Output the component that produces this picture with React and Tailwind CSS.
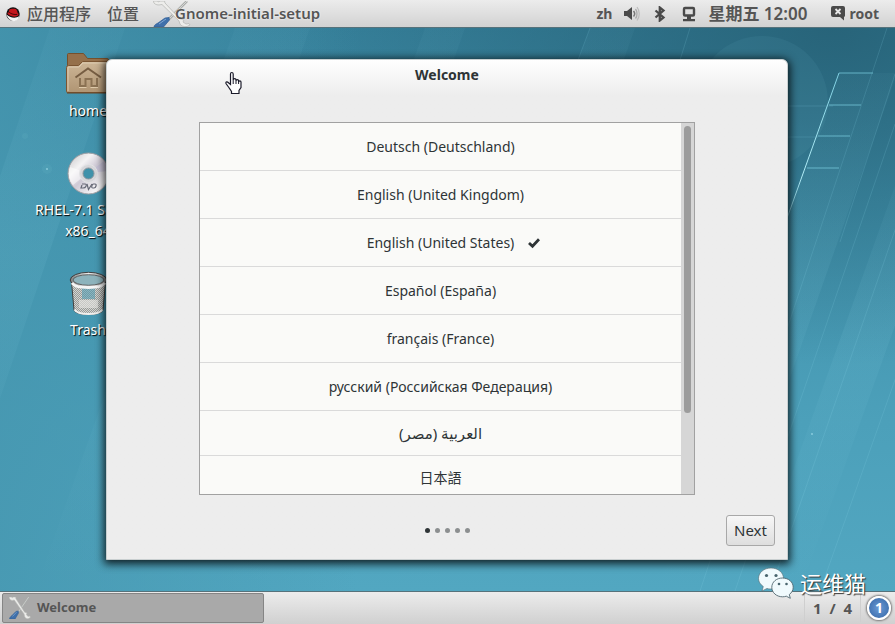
import React, { useState } from 'react';

const languages = [
  { id: 'de', label: 'Deutsch (Deutschland)' },
  { id: 'en-gb', label: 'English (United Kingdom)' },
  { id: 'en-us', label: 'English (United States)' },
  { id: 'es', label: 'Español (España)' },
  { id: 'fr', label: 'français (France)' },
  { id: 'ru', label: 'русский (Российская Федерация)' },
  { id: 'ar', label: 'العربية (مصر)', rtl: true },
  { id: 'ja', label: '日本語' },
];

const Wallpaper = () => (
  <svg className="absolute inset-0 h-full w-full" viewBox="0 0 895 563" preserveAspectRatio="none" aria-hidden="true">
    <defs>
      <linearGradient id="sky" x1="0" y1="0" x2="0" y2="1">
        <stop offset="0" stopColor="#36809a" />
        <stop offset="0.35" stopColor="#4293ad" />
        <stop offset="0.7" stopColor="#4ca0ba" />
        <stop offset="1" stopColor="#52a7c1" />
      </linearGradient>
      <linearGradient id="leftGlow" x1="0" y1="0" x2="1" y2="0">
        <stop offset="0" stopColor="#4697b0" stopOpacity="0.8" />
        <stop offset="0.4" stopColor="#4697b0" stopOpacity="0" />
      </linearGradient>
      <radialGradient id="corner" cx="0.93" cy="0" r="0.6">
        <stop offset="0" stopColor="#255f74" stopOpacity="0.85" />
        <stop offset="1" stopColor="#255f74" stopOpacity="0" />
      </radialGradient>
      <linearGradient id="ray" x1="0" y1="0" x2="0" y2="1">
        <stop offset="0" stopColor="#7fd0e2" />
        <stop offset="0.5" stopColor="#b4eef8" />
        <stop offset="1" stopColor="#7fd0e2" stopOpacity="0" />
      </linearGradient>
      <linearGradient id="band" x1="0" y1="0" x2="0" y2="1">
        <stop offset="0" stopColor="#8fd8ea" stopOpacity="0.04" />
        <stop offset="0.4" stopColor="#8fd8ea" stopOpacity="0.09" />
        <stop offset="1" stopColor="#8fd8ea" stopOpacity="0" />
      </linearGradient>
    </defs>
    <rect width="895" height="563" fill="url(#sky)" />
    <rect width="895" height="563" fill="url(#leftGlow)" />
    <rect width="895" height="563" fill="url(#corner)" />
    <g fill="url(#band)">
      <path d="M50 0h75L-65 563h-75z" />
      <path d="M235 0h75L110 563H35z" />
      <path d="M425 0h40L265 563h-40z" />
      <path d="M590 0h45L435 563h-45z" />
      <path d="M839 45h58L715 563h-58z" />
      <path d="M905 130h50L800 563h-50z" />
    </g>
    <circle cx="762" cy="74" r="66" fill="#6fb4c6" opacity="0.1" />
    <g stroke="#8fd8ea" strokeOpacity="0.16">
      <path d="M887 0 700 563M965 0 770 563M1020 0 820 563M590 0 578 32M690 0 680 32" />
      <path d="M895 46 840 214M895 96 735 563" />
      <path d="M788 78h45M788 109h30" />
    </g>
    <path d="M839 45 766 249" stroke="url(#ray)" fill="none" />
    <path d="M839 45h34M829 77h32M818 108h32M807 140h32" stroke="#74c6d8" strokeOpacity="0.8" />
    <g fill="#aee6f0">
      <circle cx="47" cy="141" r="1" opacity="0.6" />
      <circle cx="812" cy="406" r="1" opacity="0.6" />
      <circle cx="25" cy="108" r="3" opacity="0.06" />
      <circle cx="47" cy="141" r="5" opacity="0.06" />
    </g>
  </svg>
);

const RedHatIcon = () => (
  <svg className="h-4 w-4" viewBox="0 0 16 16" aria-hidden="true">
    <circle cx="8" cy="8" r="6.7" fill="#111" />
    <path d="M1.500 8.500c3 3 9 4.500 12.800 1.500-.6 3.300-3 5-5.300 5.200-2.500 0-6-2-7.500-6.700z" fill="#f4f4f4" />
    <path d="M4.300 3.600C6 2.300 8 3 9.300 2.800c2.200-.2 2.800 1.600 3.400 4.200 1 .6 1.300 1.600.4 2.600-2 2-7.300 1.100-10.400-1.700-.7-1 .1-1.500 1-1.400z" fill="#c4161c" />
    <path d="M4.200 6.300c2 1.800 5.300 2.600 8 2.100" stroke="#4c0508" fill="none" />
  </svg>
);

// Wrench crossed with a screwdriver
const ToolsIcon = ({ className }) => (
  <svg className={className} viewBox="0 0 38 26" preserveAspectRatio="none" aria-hidden="true">
    <path d="M34 0 16 18" stroke="#a9acaa" strokeWidth="2.500" />
    <path d="M34 0 16 18" stroke="#d4d5d3" strokeWidth="1" />
    <path d="M1 26c0-2 2-3 4-4l7-5 4-.5.500 2.500-6 7z" fill="#3f70ab" stroke="#2d5b94" strokeWidth="0.700" />
    <path d="m6 23 7-5" stroke="#7fa6d1" />
    <path d="M0 0c1 3 3 4 6 4l3-.5L26 20l1 3c1 2 4 3 7 2.500l3-1.500-1-1.500-3 .5-3-2 1-2-4-1L12 2l-.5-2H6.500L6 1 4 0z" fill="#ededeb" stroke="#b9bab7" strokeWidth="0.800" />
  </svg>
);

const VolumeIcon = () => (
  <svg className="h-4 w-4" viewBox="0 0 16 16" fill="none" aria-hidden="true">
    <path d="M0 5h3l5-4v13l-5-4H0z" fill="#4a4a4a" />
    <path d="M9.500 5c1.300 1.500 1.300 4 0 5.500" stroke="#777" strokeWidth="1.500" />
    <path d="M11.500 3c2 2.500 2 7 0 9.500" stroke="#aaa" strokeWidth="1.300" />
    <path d="M13 1c3 4 3 9.500 0 13.500" stroke="#bbb" strokeWidth="1.200" />
  </svg>
);

const BluetoothIcon = () => (
  <svg className="h-4 w-3" viewBox="0 0 12 16" fill="none" aria-hidden="true">
    <path d="m1.500 4.500 8 7L5.800 14.500v-13l3.700 3-8 7" stroke="#4a4a4a" strokeWidth="2.300" />
  </svg>
);

const NetworkIcon = () => (
  <svg className="h-4 w-3.5" viewBox="0 0 14 16" fill="none" aria-hidden="true">
    <rect x="2" y="2" width="10" height="7.500" rx="1" stroke="#4a4a4a" strokeWidth="2.400" />
    <path d="M5 10h4v3h4v2.200H1V13h4z" fill="#4a4a4a" />
  </svg>
);

const ChatIcon = () => (
  <svg className="h-4 w-3.5" viewBox="0 0 14 16" aria-hidden="true">
    <path d="M2 0h10a2 2 0 0 1 2 2v7a2 2 0 0 1-1 2v3.500L9 11H2a2 2 0 0 1-2-2V2a2 2 0 0 1 2-2z" fill="#4a4a4a" />
    <path d="m4.500 3 5 5m0-5-5 5" stroke="#e8e8e8" strokeWidth="1.800" />
  </svg>
);

const FolderIcon = () => (
  <svg className="h-12 w-12" viewBox="0 0 48 48" aria-hidden="true">
    <defs>
      <linearGradient id="folder" x1="0" y1="0" x2="0" y2="1">
        <stop offset="0" stopColor="#cdb697" />
        <stop offset="1" stopColor="#b09573" />
      </linearGradient>
    </defs>
    <path d="M3.500 42V4.500q0-1 1-1h15l4 5H43q1.500 0 1.500 1.500v32z" fill="#95704b" stroke="#76502c" />
    <path d="M2.500 41.500v-24q0-2 2-2h10l4-4H44q2 0 2 2v28q0 1-1 1H3.500q-1 0-1-1z" fill="url(#folder)" stroke="#7b5532" />
    <path d="M4 41V18q0-1 1-1h10l4-4h26" fill="none" stroke="#ddcbb1" />
    <path d="M3 43h42" stroke="#6b4522" />
    <path d="M11.500 27.500 24 18.500l13 9" fill="none" stroke="#765d42" strokeWidth="2" />
    <path d="M16 28v8h5.500v-7h6v7H33v-8" fill="none" stroke="#8b7253" strokeWidth="2" />
    <path d="M15 37.500h7.500m4 0H34" stroke="#dfcaaa" />
  </svg>
);

const DiscIcon = () => (
  <svg className="h-12 w-12" viewBox="0 0 48 48" aria-hidden="true">
    <defs>
      <linearGradient id="disc" x1="0" y1="0" x2="1" y2="1">
        <stop offset="0" stopColor="#c4c3c5" />
        <stop offset="0.3" stopColor="#f4f3f4" />
        <stop offset="0.5" stopColor="#cfcad6" />
        <stop offset="0.8" stopColor="#f7f6f7" />
        <stop offset="1" stopColor="#b9babf" />
      </linearGradient>
    </defs>
    <circle cx="24.500" cy="24.500" r="20.500" fill="url(#disc)" stroke="#9b9ca1" />
    <path d="M24 24 6 18a20 20 0 0 0 3 18z" fill="#fff" opacity="0.500" />
    <path d="m24 24 16-12a20 20 0 0 1 4 10z" fill="#b3afd1" opacity="0.400" />
    <circle cx="24.500" cy="24.500" r="9" fill="#d6d6da" stroke="#e4e4e6" />
    <circle cx="24.500" cy="24.500" r="5.500" fill="#3f91aa" stroke="#8b949b" />
    <g fill="none" stroke="#666976" strokeWidth="1.200">
      <path d="M18 35h3q2 0 1 2.200-.7 1.800-3 1.800h-2l1-3" />
      <path d="m23 35 1.500 5.500L28 35" />
      <path d="M29.500 35H31q1.500 0 1 2-.5 2-2 2h-1q-1.700 0-1.200-2 .5-2 1.700-2z" />
    </g>
  </svg>
);

const TrashIcon = () => (
  <svg className="h-12 w-12" viewBox="0 0 48 48" aria-hidden="true">
    <defs>
      <pattern id="mesh" width="2" height="2" patternUnits="userSpaceOnUse">
        <rect width="2" height="2" fill="#d4d5d2" />
        <path d="M0 0h1v1H0zM1 1h1v1H1z" fill="#989b98" />
      </pattern>
      <linearGradient id="rim" x1="0" y1="0" x2="1" y2="0">
        <stop offset="0" stopColor="#888" />
        <stop offset="0.5" stopColor="#eee" />
        <stop offset="1" stopColor="#888" />
      </linearGradient>
    </defs>
    <path d="m7.500 13 2.500 28c1 6 28 6 29 0l2.500-28z" fill="url(#mesh)" stroke="#41413f" />
    <path d="M18 19h13v11H18z" fill="#4d9bb2" opacity="0.550" />
    <path d="M15 31h19v8H15z" fill="#e6e6e3" opacity="0.600" />
    <path d="M10.500 40.500c3 6 25 6 28 0" fill="none" stroke="#f0f0ee" strokeWidth="1.800" />
    <ellipse cx="24.500" cy="11" rx="17" ry="6.500" fill="#8db3bc" stroke="url(#rim)" strokeWidth="2.500" />
    <ellipse cx="24.500" cy="11" rx="18.300" ry="7.700" fill="none" stroke="#333" strokeWidth="0.900" />
    <ellipse cx="24.500" cy="11" rx="15.500" ry="5.300" fill="none" stroke="#555" strokeWidth="0.900" />
    <path d="M8 14c4 6 29 6 33 0" fill="none" stroke="#f5f5f5" strokeWidth="3" />
  </svg>
);

const CheckIcon = () => (
  <svg className="h-3 w-3" viewBox="0 0 12 12" aria-hidden="true">
    <path d="m1 6 3.500 3.300L11 2.300" fill="none" stroke="#2e3436" strokeWidth="2.800" />
  </svg>
);

const HandPointer = () => (
  <svg className="absolute left-[117px] top-[11px] h-6 w-5" viewBox="0 0 20 24" aria-hidden="true">
    <path
      d="M6.500 13.500V3q0-1.500 1.300-1.500T9.200 3v6q0-1.400 1.400-1.400T12 9v1q0-1.300 1.300-1.300T14.600 10v1q0-1.200 1.200-1.200T17 11v5.500l-2 3v3H7.500v-2L4.500 16 2 12.500q-.4-1.500.8-1.700 1 0 1.700 1z"
      fill="#fff"
      stroke="#1b1b2a"
      strokeWidth="1.200"
    />
    <path d="M9.200 9v4m2.800-3v3m2.600-2v2" stroke="#1b1b2a" />
  </svg>
);

const WeChatIcon = () => (
  <svg className="h-8 w-9" viewBox="0 0 36 32" aria-hidden="true">
    <path d="M13 1c7 0 12.500 4.500 12.500 10.500S20 22 13 22c-1.500 0-3-.2-4-.6L4 24l1.300-4.500C2.300 17.500.5 14.700.5 11.500.5 5.500 6 1 13 1z" fill="#f0fafd" stroke="#526870" strokeWidth="0.600" />
    <path d="M24.500 11c6 0 10.700 4 10.700 9.300 0 3-1.500 5.500-3.900 7.200l1 3.800-4-2.100c-1.100.4-2.400.6-3.800.6-6 0-10.700-4.200-10.700-9.500S18.500 11 24.500 11z" fill="#f0fafd" stroke="#526870" strokeWidth="0.900" />
    <g fill="#49656e">
      <circle cx="8.500" cy="8.500" r="1.600" />
      <circle cx="18" cy="8.500" r="1.600" />
      <circle cx="21" cy="17" r="1.300" />
      <circle cx="28.500" cy="17" r="1.300" />
    </g>
  </svg>
);

const DesktopItem = ({ icon, children }) => (
  <li className="flex flex-col items-center gap-0.5">
    {icon}
    <span className="text-center text-sm leading-[21px] text-white [text-shadow:1px_1px_1px_#000]">{children}</span>
  </li>
);

const TopBar = () => (
  <header className="flex h-7 items-center border-b border-[#56727b] bg-linear-to-b from-[#ececec] to-[#d2d2d2] pl-[5px] pr-4 text-sm font-bold text-[#555]">
    <button className="flex items-center gap-1.5 text-base leading-6 font-medium">
      <RedHatIcon />
      应用程序
    </button>
    <button className="ml-4 text-base leading-6 font-medium">位置</button>
    <button className="ml-3.5 flex items-center">
      <ToolsIcon className="-mr-4 h-[26px] w-[38px]" />
      <span className="relative text-[15px] font-semibold [text-shadow:0_0_2px_#fff]">Gnome-initial-setup</span>
    </button>
    <div className="ml-auto flex items-center">
      <button>zh</button>
      <button className="ml-3" aria-label="Volume"><VolumeIcon /></button>
      <button className="ml-3.5" aria-label="Bluetooth"><BluetoothIcon /></button>
      <button className="ml-4" aria-label="Network"><NetworkIcon /></button>
      <button className="ml-3 text-[17px] leading-6 font-semibold">星期五 12:00</button>
      <button className="ml-6 flex items-center gap-1">
        <ChatIcon />
        root
      </button>
    </div>
  </header>
);

const SetupWindow = () => {
  const [selected, setSelected] = useState('en-us');

  return (
    <section className="absolute left-[106px] right-[107px] top-[31px] flex flex-col rounded-t-md border border-[#c9cfd0] bg-[#ededed] bg-linear-to-b from-white to-[#ededed] to-[36px] text-[#2e3436] shadow-[0_2px_9px_2px_rgba(0,0,0,0.8)]">
      <h1 className="pt-[5px] text-center text-sm leading-5 font-bold">Welcome</h1>
      <HandPointer />

      <div className="mx-[92px] mt-[37px] flex h-[373px] overflow-hidden border border-[#a1a1a1] bg-[#fafaf8]">
        <ul className="flex-1">
          {languages.map(lang => (
            <li key={lang.id} className="border-b border-[#dadada]">
              <button
                onClick={() => setSelected(lang.id)}
                className={`grid w-full grid-cols-[1fr_auto_1fr] items-center ${
                  lang.rtl ? 'text-[15px]' : 'text-sm'
                } ${lang.id === 'ar' || lang.id === 'ja' ? 'h-11' : 'h-[47px]'}`}
              >
                <span className="col-start-2" dir={lang.rtl ? 'rtl' : 'ltr'}>{lang.label}</span>
                {selected === lang.id && (
                  <span className="pl-3.5"><CheckIcon /></span>
                )}
              </button>
            </li>
          ))}
        </ul>
        <div className="w-[13px] bg-[#d6d6d6] px-[3px] pt-[3px]">
          <div className="h-[287px] rounded-full bg-[#9c9c9c]" />
        </div>
      </div>

      <div className="mt-5 mb-[13px] grid grid-cols-[1fr_auto_1fr] items-center px-3">
        <div className="col-start-2 flex gap-[5px]">
          {[0, 1, 2, 3, 4].map(page => (
            <span key={page} className={`h-[5px] w-[5px] rounded-full ${page === 0 ? 'bg-[#2e3436]' : 'bg-[#8c8f90]'}`} />
          ))}
        </div>
        <button className="h-[31px] w-[49px] justify-self-end rounded-[3px] border border-[#a8a8a8] bg-linear-to-b from-[#f7f7f7] to-[#dedede] text-[15px]">
          Next
        </button>
      </div>
    </section>
  );
};

const Taskbar = () => (
  <footer className="flex h-[33px] items-center border-t border-[#56727b] bg-linear-to-b from-[#ececec] to-[#d0d0d0] pl-0.5 pr-1 text-[#555]">
    <button className="flex h-[30px] w-[262px] items-center gap-1.5 rounded-xs border border-[#858585] bg-[#a9a9a9] pl-1.5 text-[13px] font-bold">
      <ToolsIcon className="h-[22px] w-[22px]" />
      Welcome
    </button>
    <span className="ml-auto border-x border-[#cfcfcf] px-2 text-[15px] leading-7 font-bold whitespace-pre">1  /  4</span>
    <button className="ml-1.5 h-6 w-6 rounded-full border-2 border-white bg-radial from-[#6b9bd6] to-[#3465a4] text-sm leading-5 font-bold text-white shadow-[0_0_2px_1px_#777]">
      1
    </button>
  </footer>
);

const App = () => (
  <div className="relative flex h-screen flex-col overflow-hidden font-['Noto_Sans','Noto_Sans_CJK_SC','DejaVu_Sans',sans-serif]">
    <TopBar />
    <main className="relative flex-1">
      <Wallpaper />
      <ul className="relative ml-7 flex w-[120px] flex-col gap-7 pt-[22px]">
        <DesktopItem icon={<FolderIcon />}>home</DesktopItem>
        <DesktopItem icon={<DiscIcon />}>RHEL-7.1 Server.<br />x86_64</DesktopItem>
        <DesktopItem icon={<TrashIcon />}>Trash</DesktopItem>
      </ul>
      <SetupWindow />
    </main>
    <Taskbar />
    <div className="absolute right-[29px] bottom-[25px] flex items-center gap-1.5 text-[22px] leading-8 text-white [text-shadow:1px_1px_1px_#333]">
      <WeChatIcon />
      <span>运维猫</span>
    </div>
  </div>
);

export default App;
